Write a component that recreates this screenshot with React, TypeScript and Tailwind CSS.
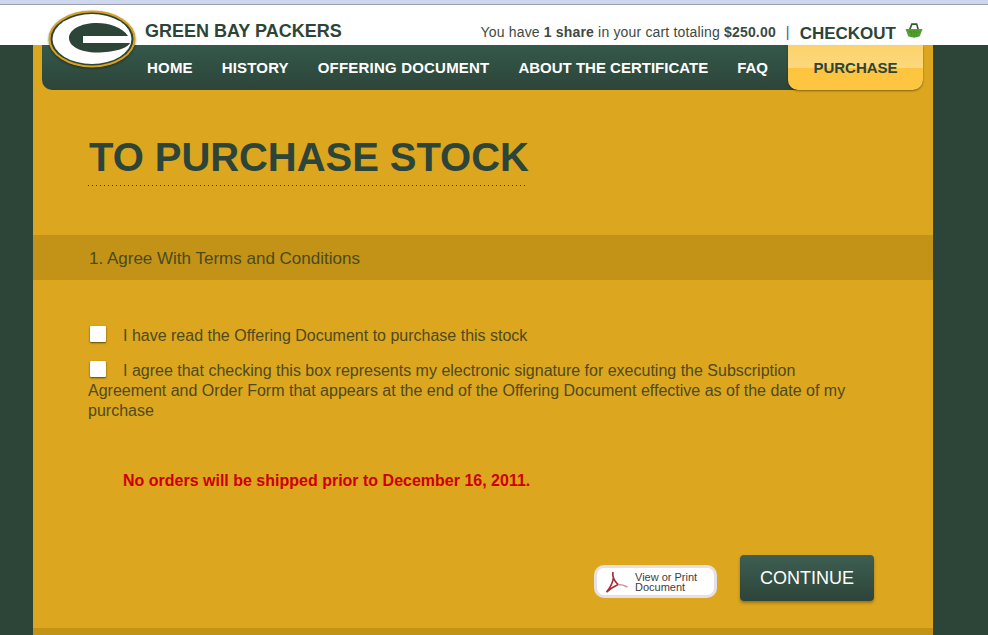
import React from "react";

const navItems = [
  { label: "HOME", className: "tracking-[0.2px]" },
  { label: "HISTORY", className: "tracking-[0.15px]" },
  { label: "OFFERING DOCUMENT", className: "tracking-[0.2px]" },
  { label: "ABOUT THE CERTIFICATE", className: "tracking-normal" },
  { label: "FAQ", className: "tracking-normal" },
];

function PackersLogo() {
  return (
    <svg width="90" height="60" viewBox="0 0 90 60" className="drop-shadow-[0_1px_1px_rgba(0,0,0,0.45)]">
      <ellipse cx="45" cy="29" rx="43" ry="28" fill="#2d4439" />
      <ellipse cx="45" cy="29" rx="42.5" ry="27.5" fill="none" stroke="#d8a21f" strokeWidth="2" />
      <ellipse cx="45" cy="29" rx="39.500" ry="25" fill="#ffffff" />
      <path
        d="M81 26C75 17 62 13 50 13C33 13 22 20 22 28C22 36 33 42.500 50 42.500C67 42.500 81 38 83 33H36V26Z"
        fill="#2d4439"
      />
    </svg>
  );
}

function BasketIcon() {
  return (
    <svg width="18" height="16" viewBox="0 0 17 15">
      <path d="M4.500 6 L6.500 1 L11 1 L12.500 6" fill="none" stroke="#2d5a30" strokeWidth="1.500" />
      <path d="M0.500 5.500 H16.500 L14 12.500 Q8.500 15 3 12.500 Z" fill="#55a02f" />
      <path d="M3 8.500 H14 M6 7 L6.500 13 M8.500 7 V14 M11 7 L10.500 13" stroke="#468a28" strokeWidth="0.700" />
    </svg>
  );
}

function PdfIcon() {
  return (
    <svg width="24" height="24" viewBox="0 0 24 24" fill="none">
      <path d="M14 15.500C17 15.500 20 16 23.500 18" stroke="#d193a0" strokeWidth="1.600" />
      <path
        d="M9 3C8 7 10.500 12 14 15.500M9.500 8C9 13 6 19 2.500 23C6 20 10 17.500 14 15.500"
        stroke="#a92b3c"
        strokeWidth="1.700"
      />
    </svg>
  );
}

const checkboxClass =
  "mr-[17px] ml-[2px] inline-block h-[16px] w-[16px] appearance-none rounded-[1px] bg-white align-[-1px] shadow-[0_1px_2px_rgba(0,0,0,0.6)]";

export default function App() {
  return (
    <div className="relative h-[635px] w-[988px] overflow-hidden bg-[#2d4439] font-['Liberation_Sans',Arial,sans-serif]">
      <div className="h-[5px] border-b border-[#9aa3ad] bg-[#cdd7ee]" />

      <header className="flex h-[40px] items-center justify-between bg-white pr-[65px] pl-[145px]">
        <span className="pt-[12px] text-[18px] font-bold text-[#2d4439]">GREEN BAY PACKERS</span>
        <div className="flex items-center pt-[15px] text-[14px] tracking-[0.17px] text-[#3d4a44]">
          <span>
            You have <b>1 share</b> in your cart totaling <b>$250.00</b>
          </span>
          <span className="mx-[10px] text-[#2f5f78]">|</span>
          <span className="pt-[2px] text-[17px] font-bold tracking-normal text-[#2d4439]">CHECKOUT</span>
          <span className="mb-[4px] ml-[9px]">
            <BasketIcon />
          </span>
        </div>
      </header>

      <main className="relative mx-[33px] h-[590px] w-[900px] bg-[#dca61e]">
        <nav className="mx-[9px] flex h-[45px] w-[881px] items-center rounded-b-[10px] bg-gradient-to-b from-[#33594a] to-[#2d4439] pl-[105px]">
          <ul className="flex flex-1 items-center gap-[29px] pt-px text-[15px] font-bold text-white">
            {navItems.map((item) => (
              <li key={item.label} className={item.className}>
                {item.label}
              </li>
            ))}
          </ul>
          <div className="flex h-[45px] w-[135px] items-center justify-center rounded-b-[10px] bg-[linear-gradient(to_bottom,#fbd26a_0%,#fdd77c_50%,#fdc53f_52%,#fdc63f_100%)] pt-px text-[15px] font-bold text-[#2d4439] shadow-[0_1px_2px_rgba(0,0,0,0.4)]">
            PURCHASE
          </div>
        </nav>

        <div className="px-[55px] pt-[42px]">
          <h1 className="pb-[3px] pl-px text-[40px] leading-[50px] font-bold tracking-[-0.06px] whitespace-nowrap text-[#2d4439]">
            TO PURCHASE STOCK
          </h1>
          <div className="h-px w-[438px] bg-[linear-gradient(to_right,#3f3a1c_1px,transparent_1px)] bg-[length:4px_1px]" />
        </div>

        <div className="mt-[49px] flex h-[45px] items-center bg-[#c29317] pt-[2px] pr-[55px] pl-[56px] text-[17px] text-[#4a4a1f]">
          1. Agree With Terms and Conditions
        </div>

        <div className="px-[55px] pt-[46px] text-[16px] leading-[20px] text-[#4f4a1e]">
          <p>
            <input type="checkbox" className={checkboxClass} />
            I have read the Offering Document to purchase this stock
          </p>
          <p className="mt-[15px] w-[775px]">
            <input type="checkbox" className={checkboxClass} />
            I agree that checking this box represents my electronic signature for executing the Subscription Agreement and Order Form that appears at the end of the Offering Document effective as of the date of my purchase
          </p>
          <p className="mt-[50px] pl-[35px] font-bold text-[#cc0000]">No orders will be shipped prior to December 16, 2011.</p>
        </div>

        <div className="mt-[64px] flex items-center justify-end gap-[23px] pr-[59px]">
          <button className="mt-[6px] flex h-[33px] w-[123px] items-center rounded-[10px] border-[3px] border-[#e6dfe6] bg-white pl-[7px] text-[11px] leading-[10px] text-[#3d3d3d]">
            <PdfIcon />
            <span className="ml-[7px] pt-px text-left">
              View or Print
              <br />
              Document
            </span>
          </button>
          <button className="h-[46px] w-[134px] rounded-[4px] bg-gradient-to-b from-[#3d5f52] to-[#2d4439] text-[18px] text-white shadow-[0_2px_3px_rgba(0,0,0,0.3)]">
            CONTINUE
          </button>
        </div>

        <div className="absolute inset-x-0 top-[583px] h-[7px] bg-[#c29317]" />
      </main>

      <div className="absolute top-[10px] left-[47px]">
        <PackersLogo />
      </div>
    </div>
  );
}
